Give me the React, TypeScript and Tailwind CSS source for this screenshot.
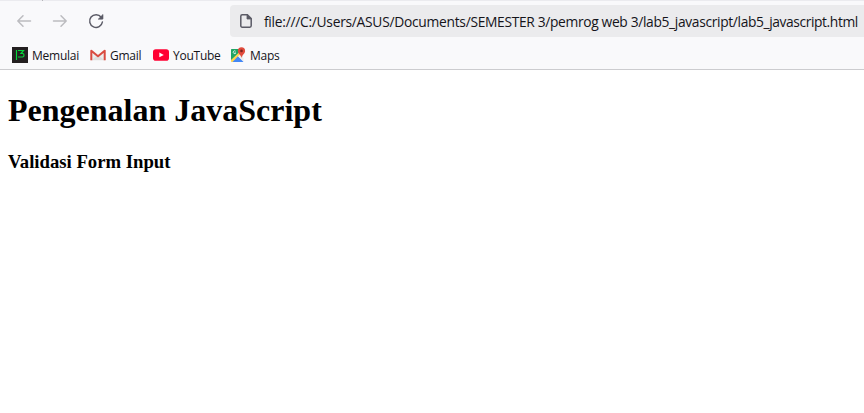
import type { ReactNode } from "react";

function Arrow({ flip = false }: { flip?: boolean }) {
  return (
    <svg width="16" height="16" viewBox="0 0 16 16" fill="none" stroke="#bcbcc0" strokeWidth="1.5" strokeLinecap="round" strokeLinejoin="round" className={flip ? "rotate-180" : ""}>
      <path d="M14.5 8H1.8M7 2.8 1.8 8 7 13.2" />
    </svg>
  );
}

function Reload() {
  return (
    <svg width="16" height="16" viewBox="0 0 16 16" fill="none">
      <path d="M13.2 4.2A6.4 6.4 0 1 0 14.4 9" stroke="#5b5b66" strokeWidth="1.5" strokeLinecap="round" />
      <path d="M15 1.4V5.6a.6.6 0 0 1-.6.6h-4.2Z" fill="#5b5b66" stroke="#5b5b66" strokeWidth=".6" strokeLinejoin="round" />
    </svg>
  );
}

function PageIcon() {
  return (
    <svg width="12" height="14" viewBox="0 0 12 14" fill="none" className="shrink-0">
      <path d="M2.2.8h5.2l3.8 3.8v7.2c0 .8-.6 1.4-1.4 1.4H2.200c-.8 0-1.400-.6-1.400-1.400V2.200C.8 1.400 1.400.8 2.200.8Z" stroke="#5b5b66" strokeWidth="1.5" />
      <path d="M7 1v4h4.200Z" fill="#5b5b66" stroke="#5b5b66" strokeWidth=".8" />
    </svg>
  );
}

function MemulaiIcon() {
  return (
    <svg width="16" height="16" viewBox="0 0 16 16" fill="none">
      <path d="M0 0h16v16H0Z" fill="#231f20" />
      <path d="M4.500 3v10M6 3.500h5.500L9 6.500h1.500c2 0 2 3.500 0 3.500H6" stroke="#05d63b" strokeWidth="1.2" />
    </svg>
  );
}

function GmailIcon() {
  return (
    <svg width="16" height="16" viewBox="0 0 16 16" fill="none">
      <path d="M1 3h14v10.500H1Z" fill="#ececec" />
      <path d="m2 13 6-5 6 5Z" fill="#dedede" />
      <path d="M2 3h12L8 8Z" fill="#f8f8f8" />
      <path d="M1.300 13.200V3.700L8 9.200l6.700-5.500v9.500" stroke="#d94b40" strokeWidth="2" strokeLinejoin="round" />
    </svg>
  );
}

function YouTubeIcon() {
  return (
    <svg width="16" height="12" viewBox="0 0 16 12">
      <rect width="16" height="11.500" y=".2" rx="2.800" fill="#ff0033" />
      <path d="m6.300 3.500 4.500 2.400-4.500 2.400Z" fill="#fff" />
    </svg>
  );
}

function MapsIcon() {
  return (
    <svg width="16" height="16" viewBox="0 0 16 16" fill="none">
      <path d="M2 2h11v13H2C1.400 15 1 14.600 1 14V3c0-.6.400-1 1-1Z" fill="#e4e5e6" />
      <path d="M2 2h8.500v3L1 13.500V3c0-.6.400-1 1-1Z" fill="#20a464" />
      <path d="m1 13 8.500-8 2 2-8 8H2c-.6 0-1-.4-1-1Z" fill="#ffd34d" />
      <path d="m2.500 15 5.500-5.800 5.500 5.800Z" fill="#4387f5" />
      <path d="m8 9.200 2-2 3.500 4v3.300Z" fill="#eee" />
      <path d="M5.600 4.200A1.400 1.400 0 1 0 5.800 6H4.500" stroke="#fff" strokeWidth=".8" />
      <path d="M11.500.3a3.600 3.600 0 0 1 3.600 3.600c0 2.600-2.900 3.400-3.600 7-.7-3.600-3.600-4.400-3.600-7A3.600 3.600 0 0 1 11.500.3Z" fill="#e14b3c" />
      <circle cx="11.500" cy="3.900" r="1.300" fill="#7b231e" />
    </svg>
  );
}

function Bookmark({ icon, className, children }: { icon: ReactNode; className: string; children: ReactNode }) {
  return (
    <div className={`flex shrink-0 items-center gap-1 ${className}`}>
      <span className="flex h-4 w-4 shrink-0 items-center">{icon}</span>
      <span className="whitespace-nowrap pt-0.5">{children}</span>
    </div>
  );
}

export default function App() {
  return (
    <div className="h-[413px] w-[864px] overflow-hidden bg-white font-['Open_Sans',sans-serif] text-[#15141a]">
      <header className="h-[70px] border-b border-[#cccccf] bg-[#f9f9fb]">
        <div className="flex h-px bg-[#ebebef] pl-[42px]">
          <span className="h-px w-px bg-[#b5b5b9]" />
        </div>
        <div className="flex h-10 items-center pl-4">
          <div className="flex w-[214px] shrink-0 gap-5">
            <Arrow />
            <Arrow flip />
            <Reload />
          </div>
          <div className="flex h-8 min-w-0 grow items-center gap-3 rounded-l bg-[#ebebed] pl-2.5">
            <PageIcon />
            <span className="whitespace-nowrap pt-0.5 text-[13.8px] tracking-[-0.335px]">
              <span className="tracking-[-0.27px]">file:///C:/Users/ASUS/Documents/</span>
              SEMESTER 3/pemrog web 3/lab5_javascript/
              <span className="tracking-[-0.39px]">lab5_javascript.html</span>
            </span>
          </div>
        </div>
        <nav className="flex h-[28px] items-center pl-3 text-[12px] tracking-[-0.25px]">
          <Bookmark icon={<MemulaiIcon />} className="w-[78px]">Memulai</Bookmark>
          <Bookmark icon={<GmailIcon />} className="w-[63px]">Gmail</Bookmark>
          <Bookmark icon={<YouTubeIcon />} className="w-[77px]">YouTube</Bookmark>
          <Bookmark icon={<MapsIcon />} className="w-[50px]">Maps</Bookmark>
        </nav>
      </header>
      <main className="px-2 pt-[22px] font-['Liberation_Serif',serif] font-bold text-black">
        <h1 className="text-[32px] leading-[37px]">Pengenalan JavaScript</h1>
        <h3 className="mt-[22px] text-[18.72px] leading-[22px]">Validasi Form Input</h3>
      </main>
    </div>
  );
}
